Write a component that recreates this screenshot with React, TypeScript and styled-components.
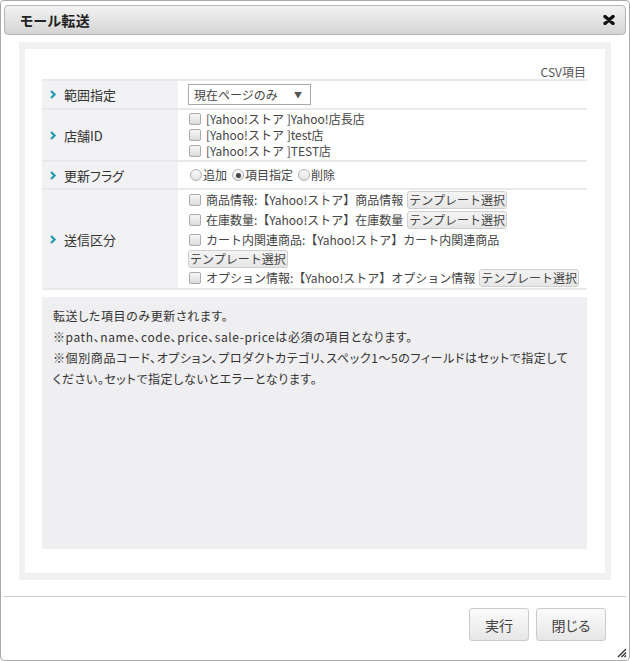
import React from "react";
import styled, { createGlobalStyle } from "styled-components";

const GlobalStyle = createGlobalStyle`
  html, body { margin: 0; padding: 0; background: #fff; }
  body {
    font-family: "Noto Sans CJK JP", "Noto Sans", sans-serif;
    color: #333;
  }
  * { box-sizing: border-box; }
`;

const Dialog = styled.div`
  position: relative;
  width: 630px;
  height: 661px;
  border: 1px solid #a9a9a9;
  border-radius: 4px;
  padding: 4px 3px 0;
  display: flex;
  flex-direction: column;
  background: #fff;
`;

const TitleBar = styled.div`
  height: 30px;
  flex: none;
  border: 1px solid #b5b5b5;
  border-radius: 4px;
  background: linear-gradient(#f2f2f2 0%, #e2e2e2 55%, #d4d4d4 100%);
  display: flex;
  align-items: center;
  justify-content: space-between;
  padding: 0 10px 0 15px;
`;

const Title = styled.span`
  font-size: 14px;
  font-weight: 700;
  color: #222;
  font-feature-settings: "palt";
  letter-spacing: 0.3px;
`;

const CloseButton = styled.button`
  border: 0;
  padding: 0;
  background: transparent;
  width: 12px;
  height: 10px;
  display: flex;
  cursor: pointer;
`;

const Body = styled.div`
  padding: 7px 15px 0;
  flex: none;
`;

const Frame = styled.div`
  background: #f1f0f2;
  padding: 7px 6px;
  height: 538px;
`;

const Sheet = styled.div`
  background: #fff;
  height: 100%;
  padding: 16px 18px 24px 17px;
  display: flex;
  flex-direction: column;
`;

const Caption = styled.div`
  text-align: right;
  font-size: 12px;
  line-height: 14px;
  color: #555;
  padding-right: 1px;
`;

const Table = styled.div`
  display: grid;
  grid-template-columns: 136px 1fr;
  border-bottom: 2px solid #e9e8eb;
`;

const LabelCell = styled.div`
  background: #f2f1f3;
  border-top: 2px solid #e9e8eb;
  display: flex;
  align-items: center;
  gap: 8px;
  padding-left: 8px;
  font-size: 13px;
  color: #333;
  font-feature-settings: "palt";
`;

const ValueCell = styled.div<{ $pad?: string; $line?: number }>`
  border-top: 2px solid #e9e8eb;
  padding: ${(p) => p.$pad ?? "0 10px"};
  font-size: 12px;
  line-height: ${(p) => p.$line ?? 16}px;
  color: #444;
  display: flex;
  flex-direction: column;
  justify-content: center;
`;

const SelectBox = styled.div`
  width: 123px;
  height: 21px;
  border: 1px solid #a9a9a9;
  display: flex;
  align-items: center;
  justify-content: space-between;
  padding: 0 8px 0 5px;
  font-size: 12px;
  color: #444;
  background: #fff;
`;

const Caret = styled.span`
  font-size: 8px;
  color: #555;
`;

const Line = styled.label<{ $h?: number }>`
  display: flex;
  align-items: center;
  min-height: ${(p) => p.$h ?? 16}px;
  white-space: nowrap;
`;

const Item = styled.div`
  display: flex;
  flex-wrap: wrap;
  align-items: center;
  min-height: 20px;
`;

const CheckBox = styled.input.attrs({ type: "checkbox" })`
  appearance: none;
  width: 12px;
  height: 12px;
  margin: 0 5px 0 1px;
  border: 1px solid #ababab;
  border-radius: 2px;
  background: linear-gradient(#f6f6f6, #dcdcdc);
  flex: none;
`;

const Radio = styled.input.attrs({ type: "radio" })`
  appearance: none;
  width: 12px;
  height: 12px;
  margin: 0 1px 0 2px;
  border: 1px solid #b0b0b0;
  border-radius: 50%;
  background: linear-gradient(#fafafa, #e2e2e2);
  flex: none;
  position: relative;
  &:checked::after {
    content: "";
    position: absolute;
    left: 2.5px;
    top: 2.5px;
    width: 5px;
    height: 5px;
    border-radius: 50%;
    background: #444;
  }
`;

const RadioText = styled.span`
  margin-right: 3px;
`;

const TemplateButton = styled.button<{ $wrapped?: boolean }>`
  height: 18px;
  margin: 0 0 0 ${(p) => (p.$wrapped ? 0 : 4)}px;
  padding: 0 1px;
  border: 1px solid #cfcfcf;
  border-radius: 3px;
  background: linear-gradient(#f4f4f4, #e6e6e6);
  font-family: inherit;
  font-size: 12px;
  line-height: 16px;
  color: #444;
  white-space: nowrap;
`;

const Info = styled.div`
  margin-top: 7px;
  flex: 1;
  background: #efeef0;
  padding: 8px 11px;
  font-size: 12px;
  line-height: 21px;
  color: #333;
  font-feature-settings: "palt";
  letter-spacing: 0.6px;
`;

const InfoLine = styled.div`
  white-space: nowrap;
`;

const Footer = styled.div`
  margin-top: 16px;
  border-top: 1px solid #c9c9c9;
  padding: 11px 20px 0 0;
  display: flex;
  justify-content: flex-end;
  gap: 7px;
`;

const ActionButton = styled.button<{ $w: number }>`
  width: ${(p) => p.$w}px;
  height: 33px;
  border: 1px solid #cbcbcb;
  border-radius: 3px;
  background: linear-gradient(#fbfbfb 0%, #f1f1f1 50%, #e6e6e6 100%);
  font-family: inherit;
  font-feature-settings: "palt";
  font-size: 14px;
  color: #444;
  cursor: pointer;
`;

const ResizeGrip = styled.svg`
  position: absolute;
  right: 2px;
  bottom: 2px;
`;

const Chevron = () => (
  <svg width="6" height="9" viewBox="0 0 6 9">
    <polyline points="1,1 4.5,4.5 1,8" fill="none" stroke="#2a9db4" strokeWidth="2.4" />
  </svg>
);

const Label = ({ children }: { children: React.ReactNode }) => (
  <LabelCell>
    <Chevron />
    <span>{children}</span>
  </LabelCell>
);

const stores = ["[Yahoo!ストア ]Yahoo!店長店", "[Yahoo!ストア ]test店", "[Yahoo!ストア ]TEST店"];

const sendItems: { text: string; wrap?: boolean }[] = [
  { text: "商品情報:【Yahoo!ストア】商品情報" },
  { text: "在庫数量:【Yahoo!ストア】在庫数量" },
  { text: "カート内関連商品:【Yahoo!ストア】カート内関連商品", wrap: true },
  { text: "オプション情報:【Yahoo!ストア】オプション情報" },
];

const infoLines = [
  "転送した項目のみ更新されます。",
  "※path、name、code、price、sale-priceは必須の項目となります。",
  "※個別商品コード、オプション、プロダクトカテゴリ、スペック1～5のフィールドはセットで指定して",
  "ください。セットで指定しないとエラーとなります。",
];

export default function App() {
  return (
    <>
      <GlobalStyle />
      <Dialog>
        <TitleBar>
          <Title>モール転送</Title>
          <CloseButton aria-label="close">
            <svg width="12" height="10" viewBox="0 0 12 10">
              <path d="M2 1.5 L10 8.5 M10 1.5 L2 8.5" stroke="#111" strokeWidth="3.4" strokeLinecap="round" />
            </svg>
          </CloseButton>
        </TitleBar>
        <Body>
          <Frame>
            <Sheet>
              <Caption>CSV項目</Caption>
              <Table>
                <Label>範囲指定</Label>
                <ValueCell $pad="3px 10px">
                  <SelectBox>
                    <span>現在ページのみ</span>
                    <Caret>▼</Caret>
                  </SelectBox>
                </ValueCell>

                <Label>店舗ID</Label>
                <ValueCell $pad="1px 10px">
                  {stores.map((s) => (
                    <Line key={s}>
                      <CheckBox />
                      {s}
                    </Line>
                  ))}
                </ValueCell>

                <Label>更新フラグ</Label>
                <ValueCell $line={26}>
                  <Line $h={26}>
                    <Radio name="flag" />
                    <RadioText>追加</RadioText>
                    <Radio name="flag" defaultChecked />
                    <RadioText>項目指定</RadioText>
                    <Radio name="flag" />
                    <RadioText>削除</RadioText>
                  </Line>
                </ValueCell>

                <Label>送信区分</Label>
                <ValueCell $pad="0 3px 0 10px" $line={20}>
                  {sendItems.map((it) => (
                    <Item key={it.text}>
                      <Line $h={20}>
                        <CheckBox />
                        {it.text}
                      </Line>
                      <TemplateButton $wrapped={it.wrap}>テンプレート選択</TemplateButton>
                    </Item>
                  ))}
                </ValueCell>
              </Table>
              <Info>
                {infoLines.map((l) => (
                  <InfoLine key={l}>{l}</InfoLine>
                ))}
              </Info>
            </Sheet>
          </Frame>
        </Body>
        <Footer>
          <ActionButton $w={60}>実行</ActionButton>
          <ActionButton $w={70}>閉じる</ActionButton>
        </Footer>
        <ResizeGrip width="10" height="10" viewBox="0 0 10 10">
          <path d="M1 9 L9 1 M4.5 9 L9 4.5 M7.5 9 L9 7.5" stroke="#333" strokeWidth="1.4" />
        </ResizeGrip>
      </Dialog>
    </>
  );
}
